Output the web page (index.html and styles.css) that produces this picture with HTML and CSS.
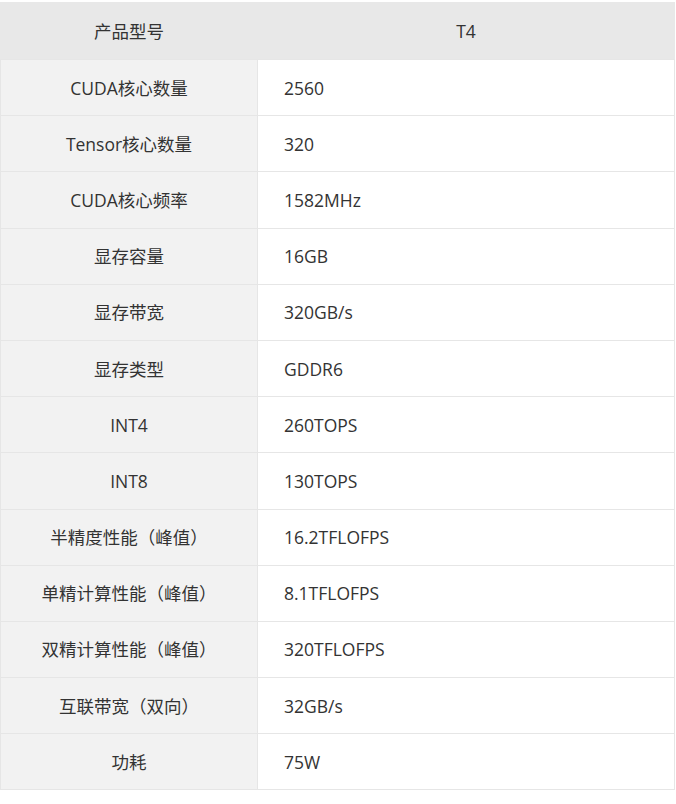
FILE: index.html
```html
<!DOCTYPE html>
<html lang="zh-CN">
<head>
<meta charset="utf-8">
<title>T4</title>
<link rel="stylesheet" href="styles.css">
</head>
<body>
<table class="spec">
  <thead>
    <tr><th class="key">产品型号</th><th class="val-h">T4</th></tr>
  </thead>
  <tbody>
    <tr><td class="key">CUDA核心数量</td><td class="val">2560</td></tr>
    <tr><td class="key">Tensor核心数量</td><td class="val">320</td></tr>
    <tr><td class="key">CUDA核心频率</td><td class="val">1582MHz</td></tr>
    <tr><td class="key">显存容量</td><td class="val">16GB</td></tr>
    <tr><td class="key">显存带宽</td><td class="val">320GB/s</td></tr>
    <tr><td class="key">显存类型</td><td class="val">GDDR6</td></tr>
    <tr><td class="key">INT4</td><td class="val">260TOPS</td></tr>
    <tr><td class="key">INT8</td><td class="val">130TOPS</td></tr>
    <tr><td class="key">半精度性能（峰值）</td><td class="val">16.2TFLOFPS</td></tr>
    <tr><td class="key">单精计算性能（峰值）</td><td class="val">8.1TFLOFPS</td></tr>
    <tr><td class="key">双精计算性能（峰值）</td><td class="val">320TFLOFPS</td></tr>
    <tr><td class="key">互联带宽（双向）</td><td class="val">32GB/s</td></tr>
    <tr><td class="key">功耗</td><td class="val">75W</td></tr>
  </tbody>
</table>
</body>
</html>
```
FILE: styles.css
```css
html, body {
  margin: 0;
  padding: 0;
  background: #ffffff;
}
body {
  padding-top: 2px;
  font-family: "Open Sans", "Noto Sans CJK SC", sans-serif;
  font-size: 17.5px;
  color: #333333;
}
.spec {
  width: 675px;
  border-collapse: collapse;
  table-layout: fixed;
}
.spec th,
.spec td {
  border: 1px solid #e6e6e6;
  padding: 0;
  vertical-align: middle;
  font-weight: normal;
  line-height: 24px;
}
.spec thead tr {
  height: 57px;
  background: #e8e8e8;
}
.spec thead th {
  border-color: #e8e8e8;
  border-bottom-color: #e6e6e6;
  text-align: center;
}
.spec tbody tr {
  height: 56.2px;
}
.spec .key {
  width: 256px;
  text-align: center;
}
.spec td.key {
  background: #f2f2f2;
}
.spec td.val {
  background: #ffffff;
  text-align: left;
  padding-left: 26px;
}
```
